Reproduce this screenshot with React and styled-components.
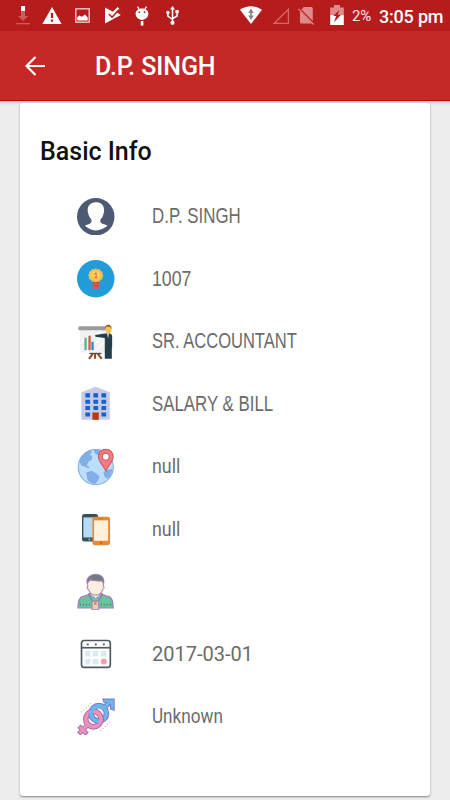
import React from 'react'
import styled, { createGlobalStyle } from 'styled-components'

const DownloadIcon = () => (
    <svg width="14" height="19" viewBox="0 0 14 19">
        <path d="M5 0h4v5H5z" fill="#fff" />
        <path d="M5 5h4v5h3l-5 5-5-5h3z" fill="#cf5a5a" />
        <path d="M0 17h14v1.3H0z" fill="#cf5a5a" />
    </svg>
)

const WarningIcon = () => (
    <svg width="20" height="17" viewBox="0 0 20 17">
        <path d="M10 0l9.6 17H.4z" fill="#fff" />
        <path d="M8.9 6h2.2v5H8.9zM8.9 12.5h2.2v2.2H8.9z" fill="#b71c1c" />
    </svg>
)

const ImageIcon = () => (
    <svg width="15" height="15" viewBox="0 0 15 15">
        <rect x="0.8" y="0.8" width="13.4" height="13.4" fill="none" stroke="#f3c9c9" strokeWidth="1.4" />
        <path d="M2.3 12.5V9.2l2-1.7 2.6 1.3L10 6.6l2.7 3v2.9z" fill="#fff" />
    </svg>
)

const PlayCheckIcon = () => (
    <svg width="16" height="17" viewBox="0 0 16 17">
        <path d="M0 .4l8 4.3L12.6 0l1.8 2-2.5 3.5L15.8 8 0 16.6z" fill="#fff" />
        <path d="M3.8 7l3.3 3.2L13.8 2.8" fill="none" stroke="#b71c1c" strokeWidth="1.6" />
    </svg>
)

const DebugIcon = () => (
    <svg width="14" height="20" viewBox="0 0 14 20">
        <path d="M2.5.7L4.5 4M11.5.7L9.5 4" stroke="#fff" strokeWidth="1.3" />
        <path d="M7 2.4c-3.8 0-6.4 2.3-6.4 5.2 0 3.6 3 6.3 6.4 6.3s6.4-2.7 6.4-6.3c0-2.9-2.6-5.2-6.4-5.2z" fill="#fff" />
        <path d="M5.8 15h2.6v4.6H5.8z" fill="#fff" />
        <circle cx="4.4" cy="6.2" r=".9" fill="#b71c1c" />
        <circle cx="9.6" cy="6.2" r=".9" fill="#b71c1c" />
    </svg>
)

const UsbIcon = () => (
    <svg width="13" height="19" viewBox="0 0 13 19">
        <path d="M6.5 2v15M1.9 7v3.2l4.6 3.3M11.1 6v4L6.5 12.5" fill="none" stroke="#fff" strokeWidth="1.5" />
        <path d="M6.5 0L9 3.6H4z" fill="#fff" />
        <circle cx="1.9" cy="6.5" r="1.7" fill="#fff" />
        <path d="M9.4 4h3.3v3.3H9.4z" fill="#fff" />
        <circle cx="6.5" cy="16.8" r="2.1" fill="#fff" />
    </svg>
)

const WifiIcon = () => (
    <svg width="22" height="18" viewBox="0 0 22 18">
        <path d="M0 3.8C6.5-1 15.5-1 22 3.8L11 18z" fill="#fff" />
        <path d="M11 2.6L13.8 7H8.2zM11 14L8.2 9.6h5.6z" fill="#858585" />
        <path d="M10.2 6h1.6v5h-1.6z" fill="#858585" />
    </svg>
)

const NoSignalIcon = () => (
    <svg width="18" height="18" viewBox="0 0 18 18">
        <path d="M16.4 2.2v14.2H2.2z" fill="none" stroke="#d36b6b" strokeWidth="1.3" />
    </svg>
)

const NoSimIcon = () => (
    <svg width="17" height="18" viewBox="0 0 17 18">
        <path d="M5.8 0H13a1.8 1.8 0 0 1 1.8 1.8V14L3.4 2.4zM2 4l12 12.5H3.6A1.6 1.6 0 0 1 2 15z" fill="#df8b8b" />
        <path d="M.4 1.8l15.2 15.7" stroke="#df8b8b" strokeWidth="1.2" />
    </svg>
)

const BatteryIcon = () => (
    <svg width="14" height="20" viewBox="0 0 14 20">
        <path d="M4 0h6v2.4h3.8V10H.2V2.4H4z" fill="#e08b8b" />
        <path d="M.2 10h13.6v10H.2z" fill="#fff" />
        <path d="M9.5 4.8L3.2 11h3L4 17.2 11 9.8H7.6z" fill="#b71c1c" />
    </svg>
)

const BackIcon = () => (
    <svg width="20" height="20" viewBox="0 0 20 20">
        <path d="M20 10H2M10.5 1L1.5 10l9 9" fill="none" stroke="#fff" strokeWidth="2.2" />
    </svg>
)

const PersonIcon = () => (
    <>
        <circle cx="56" cy="56" r="56" fill="#4c5a74" />
        <path
            d="M56 13c-16 0-25 11-24 25 0 5 1 7 2 9 1 8 5 13 9 17 1 7 0 10-5 13-5 2-10 3-14 6 8 8 19 14 32 14s26-6 35-14c-5-4-10-4-15-6-6-3-7-6-6-13 5-4 8-9 9-17 2-4 2-7 2-11 0-15-10-23-25-23z"
            fill="#fff"
        />
    </>
)

const BadgeIcon = () => (
    <>
        <circle cx="56" cy="56" r="56" fill="#219cd8" />
        <path d="M47 62h18v24H47z" fill="#e9574c" />
        <path d="M47 68h18M47 77h18" stroke="#b93f3c" strokeWidth="3" />
        <path
            d="M56 25l5 3 6-1 3 5 6 3 0 6 3 5-3 5 0 6-6 3-3 5-6-1-5 3-5-3-6 1-3-5-6-3 0-6-3-5 3-5 0-6 6-3 3-5 6 1z"
            fill="#f5bf4c"
        />
        <circle cx="56" cy="46" r="14" fill="#f9cf5f" />
        <path d="M52 42l5-3v13M51.5 53h10" fill="none" stroke="#e4643c" strokeWidth="3" />
    </>
)

const BoardIcon = () => (
    <>
        <path d="M9 20h84v68H9z" fill="#f1f1f1" />
        <path d="M9 62l42-42M9 84l64-64M28 88l65-65M50 88l43-43" stroke="#fbfbfb" strokeWidth="4" />
        <rect x="4" y="10" width="88" height="12" rx="4" fill="#9b9b9b" />
        <path d="M22 44h7v37h-7z" fill="#5fb187" />
        <path d="M34 38h7v43h-7z" fill="#d45a40" />
        <path d="M43 56h7v25h-7z" fill="#2f86e0" />
        <path d="M37 89h36v4H37z" fill="#5b4a37" />
        <path d="M47 92l-11 15M54 92v15M62 92l12 15" stroke="#8b4b20" strokeWidth="6" />
        <path d="M54 36l30-5h13c6 0 8 5 8 11v31h-1v34H83V45l-28-4z" fill="#263d49" />
        <path d="M89 31h7l-3 15z" fill="#a9d3e6" />
        <ellipse cx="94" cy="19" rx="9" ry="13" fill="#fbc54d" />
        <path d="M84 18c-2-17 22-17 19 1l-4-8H88z" fill="#a6501c" />
    </>
)

const BuildingIcon = () => (
    <>
        <path d="M13 22L56 5l42 17v82H13z" fill="#c5cae9" />
        <path
            d="M25 25h14v12H25zM49 25h14v12H49zM73 25h14v12H73zM25 44h14v12H25zM49 44h14v12H49zM73 44h14v12H73zM25 63h14v12H25zM49 63h14v12H49zM73 63h14v12H73zM25 82h14v12H25zM73 82h14v12H73z"
            fill="#1763c6"
        />
        <path d="M46 82h19v22H46z" fill="#bf360c" />
    </>
)

const GlobeIcon = () => (
    <>
        <circle cx="56" cy="57" r="52.5" fill="#bbdefb" stroke="#7da7e2" strokeWidth="3" />
        <path
            d="M7 39C12 23 25 9 42 6l2 8-6 5 7 6-1 10-10 6-5 11 8 4-2 5-12-6-10-2zM28 73l16-5 14 8 10 9-4 10-8 12c-14 0-22-6-26-16zM51 7c8-2 16 0 22 3l-4 9-10 1-7-6zM104 73c-3 9-7 15-12 19l-9-5-4-13 8-8 18-3z"
            fill="#82aee7"
        />
        <path d="M86 4c-13 0-22 9-22 22 0 14 13 25 22 43 9-18 22-29 22-43 0-13-9-22-22-22z" fill="#f47c80" stroke="#cf575d" strokeWidth="3" />
        <circle cx="86" cy="26" r="10" fill="#fff" stroke="#cf575d" strokeWidth="3" />
    </>
)

const PhonesIcon = () => (
    <>
        <rect x="15" y="12" width="48" height="82" rx="7" fill="#37515c" />
        <path d="M19 22h39v60H19z" fill="#b5dbf7" />
        <circle cx="37" cy="88" r="3" fill="#9eb4be" />
        <rect x="46" y="20" width="53" height="85" rx="8" fill="#e58a36" />
        <path d="M51 31h42v61H51z" fill="#fff0dc" />
        <circle cx="72" cy="98" r="3" fill="#9a571f" />
        <path d="M64 26h14" stroke="#b96a25" strokeWidth="2" />
    </>
)

const EmployeeIcon = () => (
    <>
        <path
            d="M41 57c-1 8-11 9-24 13-10 3-14 12-14 34h105c0-22-4-31-14-34-13-4-23-5-24-13z"
            fill="#69c3a0"
            stroke="#a181b8"
            strokeWidth="4"
        />
        <path d="M41 51h29v14L56 76 41 65z" fill="#f3e5d8" stroke="#a181b8" strokeWidth="2" />
        <path d="M32 22c-1 7 0 13 0 18-5 3 0 8 2 9 3 9 12 17 22 17s18-8 21-17c4-2 6-7 2-9V22z" fill="#fbeede" stroke="#a181b8" strokeWidth="3" />
        <path d="M30 30c-3-14 9-26 26-26 16 0 26 10 24 26-4-1-5-4-6-7-11 2-25 0-35-4-2 5-4 9-9 11z" fill="#737b88" stroke="#a181b8" strokeWidth="3" />
        <path d="M35 61c3 13 10 23 19 28 10-5 18-15 21-28" fill="none" stroke="#9477ac" strokeWidth="4" />
        <path d="M8 95h4m6 0h3m6 0h3m6 0h3M71 95h3m6 0h3m6 0h3m6 0h4" stroke="#438c78" strokeWidth="6" />
        <rect x="45" y="84" width="20" height="26" rx="2" fill="#f2cb9f" stroke="#a181b8" strokeWidth="3" />
        <circle cx="55" cy="91" r="4" fill="#a181b8" />
    </>
)

const CalendarIcon = () => (
    <>
        <rect x="13.5" y="16.5" width="86" height="80" rx="8" fill="#fff" stroke="#515965" strokeWidth="5" />
        <path d="M13 38h86" stroke="#515965" strokeWidth="5" />
        <path d="M29 28h6M53 28h6M77 28h6" stroke="#515965" strokeWidth="5" />
        <path d="M24 47h16v17H24zM47 47h17v17H47zM71 47h17v17H71zM24 71h16v17H24zM47 71h17v17H47z" fill="#dce9f2" />
        <circle cx="80" cy="79" r="9" fill="#f2a0a4" />
    </>
)

const GenderIcon = () => (
    <>
        <g fill="none" strokeLinejoin="miter">
            <circle cx="65" cy="46" r="23" stroke="#8778b7" strokeWidth="17" />
            <path d="M78 33L100 11" stroke="#8778b7" strokeWidth="15" />
            <path d="M77 3h34v34l-11-4V14H81z" fill="#68b7ee" stroke="#8778b7" strokeWidth="3" />
            <path d="M78 33l22-22" stroke="#68b7ee" strokeWidth="9" />
            <circle cx="65" cy="46" r="23" stroke="#68b7ee" strokeWidth="11" />
            <circle cx="49" cy="63" r="23" stroke="#9a72ae" strokeWidth="17" />
            <path d="M32 80L5 107M6 84l24 24" stroke="#9a72ae" strokeWidth="14" />
            <path d="M32 80L7 105M8 86l20 20" stroke="#f28ebb" strokeWidth="9" />
            <circle cx="49" cy="63" r="23" stroke="#f28ebb" strokeWidth="11" />
            <path d="M43 40a23 23 0 0 1 30-14" stroke="#68b7ee" strokeWidth="11" />
            <path d="M42 46a23 23 0 0 0 23 23" stroke="#8778b7" strokeWidth="16" />
            <path d="M43 39a23 23 0 0 0 23 30" stroke="#68b7ee" strokeWidth="11" />
            <path d="M13 43l28-26M70 98l28-27" stroke="#a999c5" strokeWidth="3" strokeDasharray="3 6" />
        </g>
    </>
)

const infoRows = [
    { icon: <PersonIcon />, value: 'D.P. SINGH', width: 89, face: 'grotesque' },
    { icon: <BadgeIcon />, value: '1007', width: 39.5, face: 'grotesque' },
    { icon: <BoardIcon />, value: 'SR. ACCOUNTANT', width: 145, face: 'grotesque' },
    { icon: <BuildingIcon />, value: 'SALARY & BILL', width: 121, face: 'grotesque' },
    { icon: <GlobeIcon />, value: 'null', width: 28 },
    { icon: <PhonesIcon />, value: 'null', width: 28 },
    { icon: <EmployeeIcon />, value: '' },
    { icon: <CalendarIcon />, value: '2017-03-01', width: 101 },
    { icon: <GenderIcon />, value: 'Unknown', width: 71 }
]

// squeezes the regular face down to a condensed width
const CondensedText = ({ children, width }) => {
    const ref = React.useRef(null)
    const [scale, setScale] = React.useState(1)

    React.useLayoutEffect(() => {
        if (width) setScale(width / ref.current.offsetWidth)
    }, [width])

    return (
        <Condensed ref={ref} style={{ transform: `scaleX(${scale})` }}>
            {children}
        </Condensed>
    )
}

const App = () => {
    return (
        <Screen>
            <GlobalStyle />
            <StatusBar>
                <StatusSlot $width={31} $start={16} $top={6}><DownloadIcon /></StatusSlot>
                <StatusSlot $width={32} $start={11} $top={7}><WarningIcon /></StatusSlot>
                <StatusSlot $width={30} $start={12} $top={8}><ImageIcon /></StatusSlot>
                <StatusSlot $width={30} $start={12} $top={7}><PlayCheckIcon /></StatusSlot>
                <StatusSlot $width={30} $start={12} $top={6}><DebugIcon /></StatusSlot>
                <StatusSlot $width={30} $start={13} $top={6}><UsbIcon /></StatusSlot>
                <Spacer />
                <StatusSlot $width={32} $start={0} $top={6}><WifiIcon /></StatusSlot>
                <StatusSlot $width={26} $start={0} $top={7}><NoSignalIcon /></StatusSlot>
                <StatusSlot $width={32} $start={0} $top={7}><NoSimIcon /></StatusSlot>
                <StatusSlot $width={22} $start={0} $top={5}><BatteryIcon /></StatusSlot>
                <BatteryText>2%</BatteryText>
                <Clock>3:05 pm</Clock>
            </StatusBar>
            <Toolbar>
                <BackIcon />
                <ToolbarTitle>D.P. SINGH</ToolbarTitle>
            </Toolbar>
            <Content>
                <Card>
                    <CardTitle>Basic Info</CardTitle>
                    {
                        infoRows.map((row, index) => (
                            <InfoRow key={index}>
                                <RowIcon viewBox="0 0 112 112">{ row.icon }</RowIcon>
                                <RowValue $face={row.face}>
                                    <CondensedText width={row.width}>{ row.value }</CondensedText>
                                </RowValue>
                            </InfoRow>
                        ))
                    }
                </Card>
            </Content>
        </Screen>
    )
}

const GlobalStyle = createGlobalStyle`
    body {
        margin: 0;
    }

    * {
        box-sizing: border-box;
    }
`

const Screen = styled.div`
    display: flex;
    flex-direction: column;
    width: 450px;
    height: 800px;
    overflow: hidden;
    background: #ededed;
    font-family: Roboto, sans-serif;
`

const StatusBar = styled.div`
    display: flex;
    height: 31px;
    flex: none;
    background: #b71c1c;
    color: #fff;
`

const StatusSlot = styled.div`
    flex: none;
    width: ${({ $width }) => $width}px;
    padding: ${({ $top, $start }) => `${$top}px 0 0 ${$start}px`};

    svg {
        display: block;
    }
`

const Spacer = styled.div`
    flex: 1;
`

const BatteryText = styled.div`
    width: 27px;
    font-size: 15px;
    line-height: 33px;
    letter-spacing: -0.2px;
    color: #fbeaea;
`

const Clock = styled.div`
    width: 71px;
    font-size: 18px;
    font-weight: 500;
    line-height: 33px;
    letter-spacing: -0.2px;
    white-space: nowrap;
`

const Toolbar = styled.div`
    display: flex;
    align-items: center;
    flex: none;
    height: 70px;
    padding-left: 25px;
    border-bottom: 1px solid #c40505;
    background: #c62828;
`

const ToolbarTitle = styled.div`
    margin-left: 50px;
    padding-top: 2px;
    font-size: 25px;
    font-weight: 500;
    letter-spacing: -0.1px;
    color: #fff;
`

const Content = styled.div`
    flex: 1;
    padding: 2px 20px 4px;
    background: linear-gradient(#c9c9c9, #ededed 4px);
`

const Card = styled.div`
    height: 693px;
    padding: 27px 20px 0;
    border-radius: 3px;
    background: #fff;
    box-shadow: 0 1px 2px rgba(0, 0, 0, 0.45);
`

const CardTitle = styled.div`
    height: 55px;
    font-size: 25px;
    font-weight: 500;
    line-height: 43px;
    color: #111;
`

const InfoRow = styled.div`
    display: flex;
    align-items: center;
    height: 62.5px;
    padding-left: 37px;
`

const RowIcon = styled.svg`
    flex: none;
    width: 37.5px;
    height: 37.5px;
`

const RowValue = styled.div`
    margin-left: 37.5px;
    font-family: ${({ $face }) => $face === 'grotesque' ? "'Liberation Sans', sans-serif" : 'Roboto, sans-serif'};
    font-size: ${({ $face }) => $face === 'grotesque' ? 22 : 21}px;
    line-height: 28px;
    color: #6b6b6b;
`

const Condensed = styled.span`
    display: inline-block;
    white-space: nowrap;
    transform-origin: left center;
`

export default App
